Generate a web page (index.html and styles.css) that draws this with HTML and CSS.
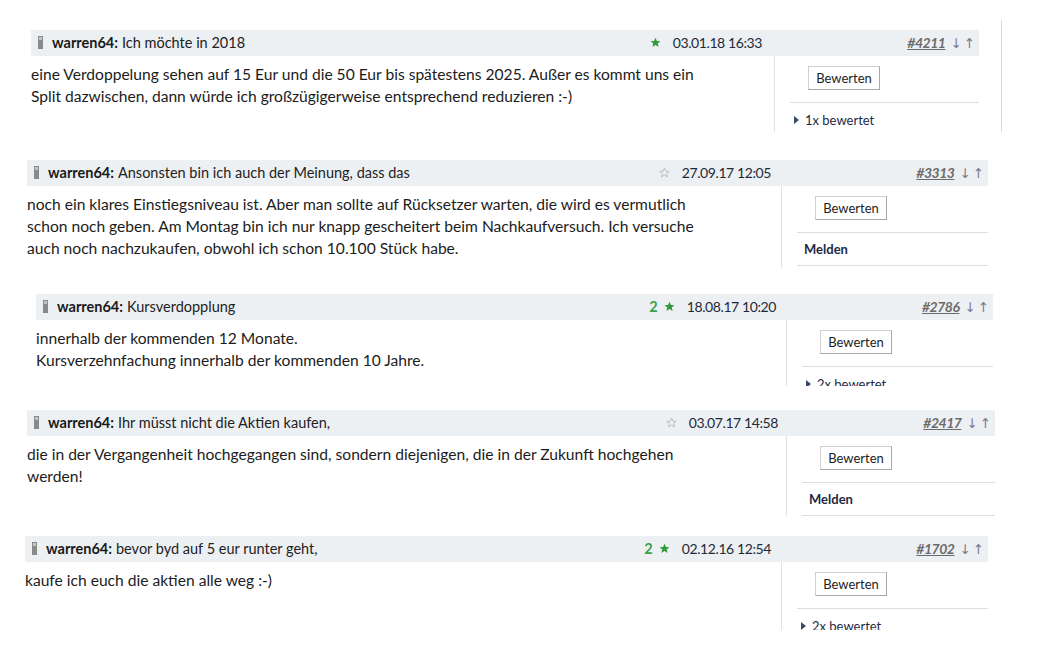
FILE: index.html
```html
<!DOCTYPE html>
<html lang="de">
<head>
<meta charset="utf-8">
<title>Forum</title>
<link rel="stylesheet" href="styles.css">
</head>
<body>
<div class="page">

  <div class="shot shot-1">
    <div class="post">
      <div class="post-head">
        <div class="head-main">
          <span class="rank"><svg width="5" height="13" viewBox="0 0 5 13"><rect x="0" y="0" width="5" height="13" fill="#8a8a8a"/><rect x="1" y="1" width="3" height="3" fill="#c4c4c4"/></svg></span>
          <span class="user">warren64:</span>
          <span class="title">Ich möchte in 2018</span>
          <span class="meta">
            <svg class="star" width="11" height="11" viewBox="0 0 24 24"><path d="M12 1.5l3.1 7.1 7.6.6-5.8 5 1.8 7.5L12 17.7l-6.7 4 1.8-7.5-5.8-5 7.6-.6z" fill="#2f9a3e"/></svg>
            <span class="date">03.01.18 16:33</span>
          </span>
        </div>
        <div class="head-side"><a class="num">#4211</a><span class="arr">↓</span><span class="arr">↑</span></div>
      </div>
      <div class="post-body">
        <div class="text">eine Verdoppelung sehen auf 15 Eur und die 50 Eur bis spätestens 2025. Außer es kommt uns ein<br>Split dazwischen, dann würde ich großzügigerweise entsprechend reduzieren :-)</div>
        <div class="side">
          <div class="btn-row"><button class="btn">Bewerten</button></div>
          <div class="side-row rated"><span class="tri"></span>1x bewertet</div>
        </div>
      </div>
    </div>
  </div>

  <div class="shot shot-2">
    <div class="post">
      <div class="post-head">
        <div class="head-main">
          <span class="rank"><svg width="5" height="13" viewBox="0 0 5 13"><rect x="0" y="0" width="5" height="13" fill="#8a8a8a"/><rect x="1" y="1" width="3" height="3" fill="#c4c4c4"/></svg></span>
          <span class="user">warren64:</span>
          <span class="title">Ansonsten bin ich auch der Meinung, dass das</span>
          <span class="meta">
            <svg class="star" width="11" height="11" viewBox="0 0 24 24"><path d="M12 2.5l2.9 6.6 7.1.6-5.4 4.7 1.7 7L12 17.6l-6.3 3.8 1.7-7L2 9.7l7.1-.6z" fill="none" stroke="#b8b8b8" stroke-width="2"/></svg>
            <span class="date">27.09.17 12:05</span>
          </span>
        </div>
        <div class="head-side"><a class="num">#3313</a><span class="arr">↓</span><span class="arr">↑</span></div>
      </div>
      <div class="post-body">
        <div class="text">noch ein klares Einstiegsniveau ist. Aber man sollte auf Rücksetzer warten, die wird es vermutlich<br>schon noch geben. Am Montag bin ich nur knapp gescheitert beim Nachkaufversuch. Ich versuche<br>auch noch nachzukaufen, obwohl ich schon 10.100 Stück habe.</div>
        <div class="side">
          <div class="btn-row"><button class="btn">Bewerten</button></div>
          <div class="side-row report">Melden</div>
        </div>
      </div>
    </div>
  </div>

  <div class="shot shot-3">
    <div class="post">
      <div class="post-head">
        <div class="head-main">
          <span class="rank"><svg width="5" height="13" viewBox="0 0 5 13"><rect x="0" y="0" width="5" height="13" fill="#8a8a8a"/><rect x="1" y="1" width="3" height="3" fill="#c4c4c4"/></svg></span>
          <span class="user">warren64:</span>
          <span class="title">Kursverdopplung</span>
          <span class="meta">
            <span class="count">2</span>
            <svg class="star" width="11" height="11" viewBox="0 0 24 24"><path d="M12 1.5l3.1 7.1 7.6.6-5.8 5 1.8 7.5L12 17.7l-6.7 4 1.8-7.5-5.8-5 7.6-.6z" fill="#2f9a3e"/></svg>
            <span class="date">18.08.17 10:20</span>
          </span>
        </div>
        <div class="head-side"><a class="num">#2786</a><span class="arr">↓</span><span class="arr">↑</span></div>
      </div>
      <div class="post-body">
        <div class="text">innerhalb der kommenden 12 Monate.<br>Kursverzehnfachung innerhalb der kommenden 10 Jahre.</div>
        <div class="side">
          <div class="btn-row"><button class="btn">Bewerten</button></div>
          <div class="side-row rated"><span class="tri"></span>2x bewertet</div>
        </div>
      </div>
    </div>
  </div>

  <div class="shot shot-4">
    <div class="post">
      <div class="post-head">
        <div class="head-main">
          <span class="rank"><svg width="5" height="13" viewBox="0 0 5 13"><rect x="0" y="0" width="5" height="13" fill="#8a8a8a"/><rect x="1" y="1" width="3" height="3" fill="#c4c4c4"/></svg></span>
          <span class="user">warren64:</span>
          <span class="title">Ihr müsst nicht die Aktien kaufen,</span>
          <span class="meta">
            <svg class="star" width="11" height="11" viewBox="0 0 24 24"><path d="M12 2.5l2.9 6.6 7.1.6-5.4 4.7 1.7 7L12 17.6l-6.3 3.8 1.7-7L2 9.7l7.1-.6z" fill="none" stroke="#b8b8b8" stroke-width="2"/></svg>
            <span class="date">03.07.17 14:58</span>
          </span>
        </div>
        <div class="head-side"><a class="num">#2417</a><span class="arr">↓</span><span class="arr">↑</span></div>
      </div>
      <div class="post-body">
        <div class="text">die in der Vergangenheit hochgegangen sind, sondern diejenigen, die in der Zukunft hochgehen<br>werden!</div>
        <div class="side">
          <div class="btn-row"><button class="btn">Bewerten</button></div>
          <div class="side-row report">Melden</div>
        </div>
      </div>
    </div>
  </div>

  <div class="shot shot-5">
    <div class="post">
      <div class="post-head">
        <div class="head-main">
          <span class="rank"><svg width="5" height="13" viewBox="0 0 5 13"><rect x="0" y="0" width="5" height="13" fill="#8a8a8a"/><rect x="1" y="1" width="3" height="3" fill="#c4c4c4"/></svg></span>
          <span class="user">warren64:</span>
          <span class="title">bevor byd auf 5 eur runter geht,</span>
          <span class="meta">
            <span class="count">2</span>
            <svg class="star" width="11" height="11" viewBox="0 0 24 24"><path d="M12 1.5l3.1 7.1 7.6.6-5.8 5 1.8 7.5L12 17.7l-6.7 4 1.8-7.5-5.8-5 7.6-.6z" fill="#2f9a3e"/></svg>
            <span class="date">02.12.16 12:54</span>
          </span>
        </div>
        <div class="head-side"><a class="num">#1702</a><span class="arr">↓</span><span class="arr">↑</span></div>
      </div>
      <div class="post-body">
        <div class="text">kaufe ich euch die aktien alle weg :-)</div>
        <div class="side">
          <div class="btn-row"><button class="btn">Bewerten</button></div>
          <div class="side-row rated"><span class="tri"></span>2x bewertet</div>
        </div>
      </div>
    </div>
  </div>

</div>
</body>
</html>
```

FILE: styles.css
```css
* { box-sizing: border-box; }

html, body {
  margin: 0;
  padding: 0;
  background: #fff;
}

body {
  font-family: Lato, "Noto Sans", sans-serif;
  color: #1c1c1c;
  width: 1050px;
  height: 661px;
  overflow: hidden;
}

.page {
  display: flex;
  flex-direction: column;
}

.shot {
  overflow: hidden;
}

.post {
  display: flex;
  flex-direction: column;
}

/* per-screenshot crop placement */
.shot-1 {
  margin-top: 20px;
  margin-left: 31px;
  width: 971px;
  height: 112px;
  padding-top: 10px;
  border-right: 1px solid #dcdcdc;
}
.shot-1 .post { width: 948px; }
.shot-1 .text { width: 743px; }

.shot-2 {
  margin-top: 28px;
  margin-left: 27px;
  width: 961px;
  height: 108px;
}
.shot-2 .post { width: 961px; }
.shot-2 .text { width: 754px; }

.shot-3 {
  margin-top: 26px;
  margin-left: 36px;
  width: 957px;
  height: 92px;
}
.shot-3 .post { width: 957px; }
.shot-3 .text { width: 750px; }

.shot-4 {
  margin-top: 24px;
  margin-left: 27px;
  width: 968px;
  height: 106px;
}
.shot-4 .post { width: 968px; }
.shot-4 .text { width: 759px; }

.shot-5 {
  margin-top: 20px;
  margin-left: 25px;
  width: 963px;
  height: 94px;
}
.shot-5 .post { width: 963px; }
.shot-5 .text { width: 756px; }

/* header bar */
.post-head {
  display: flex;
  height: 26px;
  background: #edf0f3;
  font-size: 14.5px;
  line-height: 26px;
}

.head-main {
  flex: 1;
  display: flex;
  align-items: center;
  padding-left: 7px;
  padding-right: 11px;
  min-width: 0;
}

.rank {
  display: flex;
  width: 5px;
  height: 13px;
  margin-right: 9px;
  margin-top: -1px;
}

.user {
  font-weight: 700;
  color: #1a1a1a;
  margin-right: 4px;
}

.title {
  color: #222;
  white-space: nowrap;
}

.meta {
  margin-left: auto;
  display: flex;
  align-items: center;
  white-space: nowrap;
}

.count {
  color: #3aa04a;
  font-weight: 700;
  margin-right: 6px;
}

.star {
  margin-right: 12px;
  margin-top: -1px;
}

.date {
  color: #222a38;
  font-size: 14px;
  letter-spacing: -0.4px;
}

.head-side {
  width: 206px;
  flex: none;
  display: flex;
  justify-content: flex-end;
  align-items: center;
  padding-right: 4px;
  white-space: nowrap;
}

.num {
  color: #6b6b6b;
  font-style: italic;
  font-weight: 700;
  font-size: 14px;
  letter-spacing: -0.5px;
  text-decoration: underline;
  margin-right: 3px;
}

.arr {
  color: #7a7b92;
  font-family: "DejaVu Sans", sans-serif;
  font-size: 13.5px;
  margin-left: 2px;
}

/* body */
.post-body {
  display: flex;
}

.text {
  flex: none;
  padding-top: 7px;
  font-size: 15.6px;
  line-height: 22px;
  color: #1c1c1c;
}

.side {
  flex: 1;
  border-left: 1px solid #e2e2e2;
  padding-left: 15px;
  min-height: 120px;
}

.btn-row {
  padding: 10px 0 12px 18px;
  border-bottom: 1px solid #dedede;
}

.btn {
  display: block;
  width: 72px;
  height: 24px;
  padding: 0;
  background: #fff;
  border: 1px solid #d0d0d0;
  border-right-color: #a8a8a8;
  border-bottom-color: #a8a8a8;
  border-radius: 0;
  font-family: Lato, "Noto Sans", sans-serif;
  font-size: 13px;
  color: #1c1c1c;
}

.side-row {
  height: 33px;
  display: flex;
  align-items: center;
  font-size: 13px;
  color: #1e2a44;
  border-bottom: 1px solid #dedede;
}

.rated {
  padding-left: 4px;
  border-bottom: none;
}

.tri {
  width: 0;
  height: 0;
  border-top: 4px solid transparent;
  border-bottom: 4px solid transparent;
  border-left: 5px solid #3b4a66;
  margin-right: 6px;
}

.report {
  padding-left: 7px;
  font-weight: 700;
}
```
